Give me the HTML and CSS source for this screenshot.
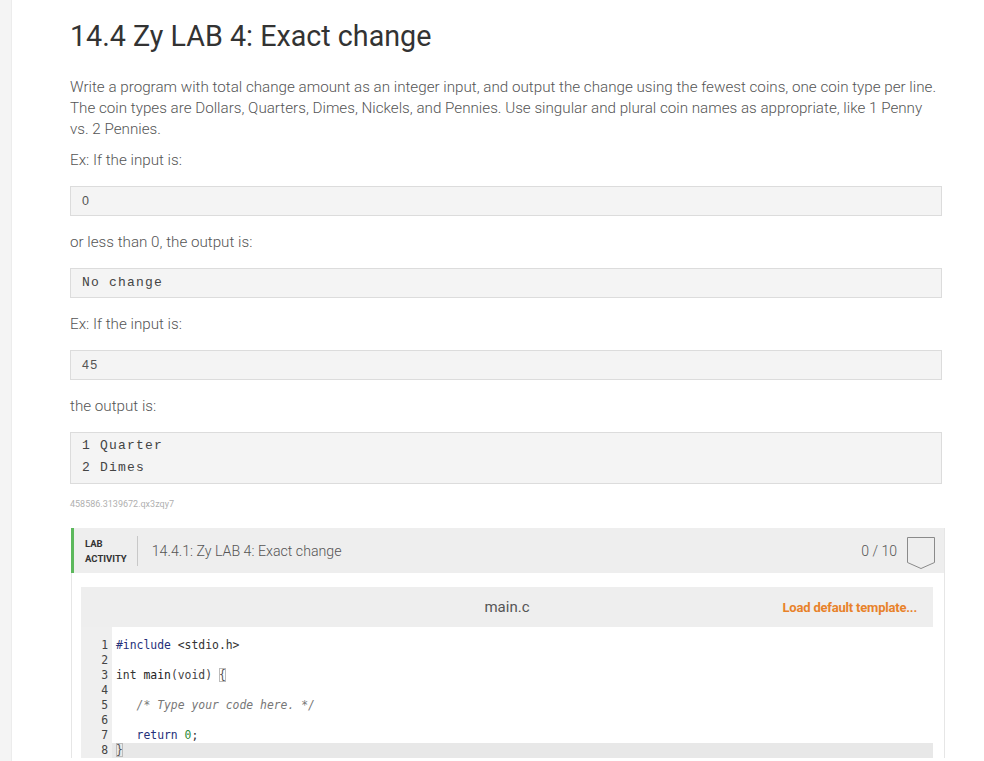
FILE: index.html
```html
<!DOCTYPE html>
<html>
<head>
<meta charset="utf-8">
<link rel="stylesheet" href="styles.css">
</head>
<body>
<div class="page">
  <aside class="strip"></aside>
  <main class="content">
    <h1 class="title">14.4 Zy LAB 4: Exact change</h1>
    <p class="intro">Write a program with total change amount as an integer input, and output the change using the fewest coins, one coin type per line. The coin types are Dollars, Quarters, Dimes, Nickels, and Pennies. Use singular and plural coin names as appropriate, like 1 Penny vs. 2 Pennies.</p>
    <p class="lead first">Ex: If the input is:</p>
    <pre class="sample">0</pre>
    <p class="lead">or less than 0, the output is:</p>
    <pre class="sample courier">No change</pre>
    <p class="lead">Ex: If the input is:</p>
    <pre class="sample">45</pre>
    <p class="lead">the output is:</p>
    <pre class="sample courier multi">1 Quarter
2 Dimes</pre>
    <div class="hash">458586.3139672.qx3zqy7</div>

    <section class="lab">
      <header class="lab-head">
        <div class="lab-label">LAB<br>ACTIVITY</div>
        <div class="lab-title">14.4.1: Zy LAB 4: Exact change</div>
        <div class="lab-score">0 / 10</div>
        <svg class="badge" width="30" height="34" viewBox="0 0 30 34"><path d="M1.5 1.5 H28.5 V26.5 L15 32.5 L1.5 26.5 Z" fill="none" stroke="#8a8a8a" stroke-width="1"/></svg>
      </header>
      <div class="lab-body">
        <div class="editor">
          <div class="editor-head">
            <span class="spacer"></span>
            <span class="file">main.c</span>
            <span class="load">Load default template...</span>
          </div>
          <div class="code">
            <div class="line"><span class="ln">1</span><span class="src"><span class="kw">#include</span> <span class="inc">&lt;stdio.h&gt;</span></span></div>
            <div class="line"><span class="ln">2</span><span class="src"></span></div>
            <div class="line"><span class="ln">3</span><span class="src"><span class="ty">int</span> <span class="fn">main</span><span class="pn">(void)</span> <span class="brace">{</span></span></div>
            <div class="line"><span class="ln">4</span><span class="src"></span></div>
            <div class="line"><span class="ln">5</span><span class="src">   <span class="cm">/* Type your code here. */</span></span></div>
            <div class="line"><span class="ln">6</span><span class="src"></span></div>
            <div class="line"><span class="ln">7</span><span class="src">   <span class="kw">return</span> <span class="num">0</span>;</span></div>
            <div class="line active"><span class="ln">8</span><span class="src"><span class="brace">}</span></span></div>
          </div>
        </div>
      </div>
    </section>
  </main>
</div>
</body>
</html>
```
FILE: styles.css
```css
* { box-sizing: border-box; }
html, body { margin: 0; padding: 0; background: #fff; }
body { font-family: Roboto, "Noto Sans", sans-serif; color: #555; }
.page { display: flex; min-height: 761px; }
.strip { width: 12px; flex: none; background: #f4f4f4; border-right: 1px solid #ececec; }
.content { width: 984px; flex: none; margin-left: -12px; padding: 0 42px 0 70px; display: flex; flex-direction: column; }
.title { font-size: 28.7px; font-weight: 400; color: #333; margin: 16px 0 0; line-height: 40px; }
.intro { font-size: 15.2px; font-weight: 300; line-height: 21px; margin: 21px 0 0; color: #555; }
.lead { font-size: 15.2px; font-weight: 300; line-height: 21px; margin: 16px 0 15px; color: #555; }
.lead.first { margin-top: 10px; }
.sample { margin: 0; background: #f4f4f4; border: 1px solid #dcdcdc; padding: 0 11px; height: 30px; line-height: 28px; font-family: "Liberation Sans", Arial, sans-serif; font-size: 12.5px; letter-spacing: 1.2px; color: #555; }
.sample.courier { font-family: "Liberation Mono", "Courier New", monospace; font-size: 13px; letter-spacing: 1.2px; color: #444; }
.sample.multi { height: auto; padding: 2px 11px 4px; line-height: 22px; }
.hash { font-size: 9px; color: #b0b0b0; margin: 14px 0 0; line-height: 12px; }
.lab { margin-top: 18px; margin-left: 1px; margin-right: -3px; border-left: 1px solid #e6e6e6; border-right: 1px solid #e6e6e6; }
.lab-head { display: flex; align-items: center; height: 45px; background: #eeeeee; border-left: 3px solid #5cb85c; margin-left: -1px; padding: 0 8px 0 11px; }
.lab-label { font-size: 9.5px; font-weight: 700; color: #333; line-height: 15px; padding-right: 10px; border-right: 1px solid #c8c8c8; height: 30px; display: flex; align-items: center; }
.lab-title { font-size: 14.2px; font-weight: 300; color: #555; margin-left: 14px; flex: 1; }
.lab-score { font-size: 14px; font-weight: 300; color: #555; margin-right: 9px; }
.badge { display: block; margin-top: 4px; }
.lab-body { padding: 14px 11px 0 9px; background: #fff; }
.editor { background: #fff; }
.editor-head { height: 40px; background: #eeeeee; display: flex; align-items: center; padding: 0 16px; }
.spacer { width: 140px; }
.file { flex: 1; text-align: center; font-size: 15px; color: #555; }
.load { width: 140px; text-align: right; font-size: 13px; font-weight: 700; color: #e8822a; letter-spacing: -0.2px; }
.code { padding-top: 11px; font-family: "DejaVu Sans Mono", monospace; font-size: 11.4px; line-height: 15px; background: linear-gradient(to right, #efefef 31px, #fff 31px); }
.line { display: flex; }
.ln { width: 31px; flex: none; text-align: right; padding-right: 4px; color: #444; }
.src { padding-left: 4px; white-space: pre; color: #333; flex: 1; }
.line.active .src { background: #e8e8e8; }
.kw { color: #24307a; }
.inc { color: #333; }
.ty { color: #333; }
.fn { color: #222; }
.pn { color: #444; }
.cm { color: #777; font-style: italic; }
.num { color: #2e8b3a; }
.brace { outline: 1px solid #bbb; outline-offset: -1px; color: #555; }
```
